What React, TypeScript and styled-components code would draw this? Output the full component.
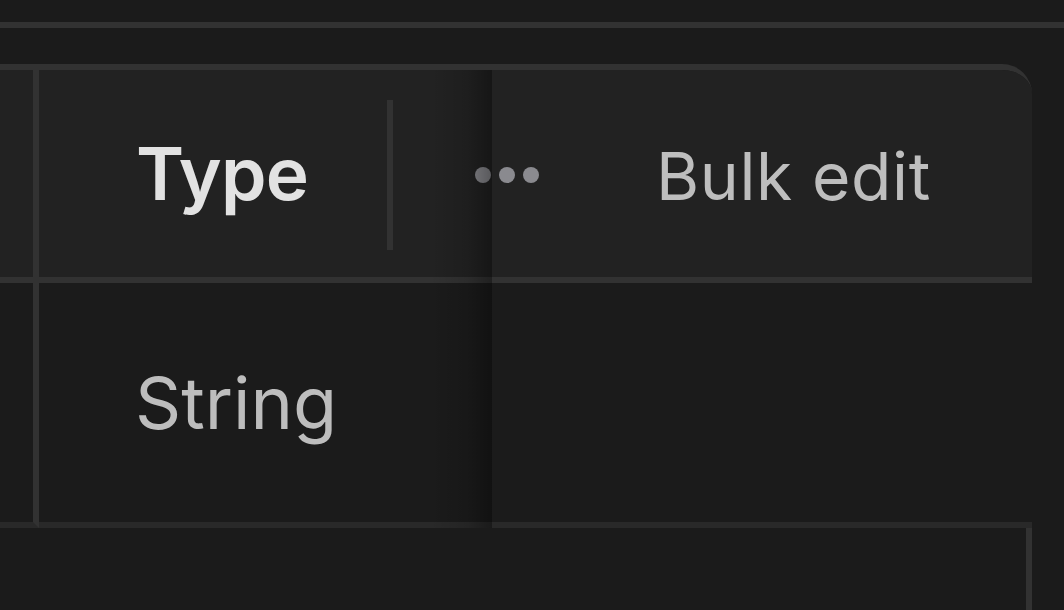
import React from "react";
import styled, { createGlobalStyle } from "styled-components";

const Global = createGlobalStyle`
  html, body { margin: 0; padding: 0; background: #1b1b1b; }
  body { font-family: Inter, "Noto Sans", sans-serif; overflow: hidden; }
  * { box-sizing: border-box; }
`;

const Page = styled.div`
  width: 1064px;
  height: 610px;
  overflow: hidden;
  background: #1b1b1b;
  display: flex;
  flex-direction: column;
`;

const TopRule = styled.div`
  margin-top: 22px;
  height: 6px;
  background: #323232;
  flex-shrink: 0;
`;

const Card = styled.div`
  margin-top: 36px;
  width: 1032px;
  border-top: 6px solid #323232;
  border-top-right-radius: 30px;
  overflow: hidden;
  flex-shrink: 0;
`;

const Row = styled.div<{ $header?: boolean }>`
  display: grid;
  grid-template-columns: 39px 453px 540px;
  height: ${(p) => (p.$header ? 213 : 245)}px;
  background: ${(p) => (p.$header ? "#222222" : "#1b1b1b")};
`;

const Cell = styled.div<{ $header?: boolean }>`
  position: relative;
  display: flex;
  align-items: center;
  border-bottom: 6px solid ${(p) => (p.$header ? "#323232" : "#292929")};
`;

const LeadCell = styled(Cell)`
  border-right: 6px solid #323232;
`;

const TypeCell = styled(Cell)`
  padding-left: 97px;
`;

const HeaderLabel = styled.span`
  font-size: 73px;
  font-weight: 600;
  color: #e2e2e2;
  line-height: 1;
  letter-spacing: -0.8px;
`;

const ValueText = styled.span`
  font-size: 72px;
  font-weight: 400;
  color: #bdbdbd;
  line-height: 1;
  margin-left: -1px;
`;

const ResizeHandle = styled.div`
  position: absolute;
  left: 348px;
  top: 30px;
  width: 6px;
  height: 150px;
  background: #323232;
`;

const StickyCell = styled(Cell)`
  &::before {
    content: "";
    position: absolute;
    right: 100%;
    top: 0;
    bottom: -6px;
    width: 62px;
    background: linear-gradient(
      to right,
      rgba(0, 0, 0, 0) 0%,
      rgba(0, 0, 0, 0.12) 60%,
      rgba(0, 0, 0, 0.36) 100%
    );
    z-index: 2;
    pointer-events: none;
  }
`;

const Dots = styled.div`
  display: flex;
  gap: 8px;
  margin-left: -17px;
  margin-top: 2px;
`;

const Dot = styled.span`
  width: 16px;
  height: 16px;
  border-radius: 50%;
  background: #8a8a8f;
`;

const BulkEdit = styled.span`
  margin-left: 117px;
  font-size: 66px;
  letter-spacing: 0.6px;
  color: #bebebe;
  line-height: 1;
  margin-top: 4px;
`;

const Footer = styled.div`
  flex: 1;
  width: 1032px;
  border-right: 6px solid #323232;
`;

export default function App() {
  return (
    <>
      <Global />
      <Page>
        <TopRule />
        <Card>
          <Row $header>
            <LeadCell $header />
            <TypeCell $header>
              <HeaderLabel>Type</HeaderLabel>
              <ResizeHandle />
            </TypeCell>
            <StickyCell $header>
              <Dots>
                <Dot />
                <Dot />
                <Dot />
              </Dots>
              <BulkEdit>Bulk edit</BulkEdit>
            </StickyCell>
          </Row>
          <Row>
            <LeadCell />
            <TypeCell>
              <ValueText>String</ValueText>
            </TypeCell>
            <StickyCell />
          </Row>
        </Card>
        <Footer />
      </Page>
    </>
  );
}
